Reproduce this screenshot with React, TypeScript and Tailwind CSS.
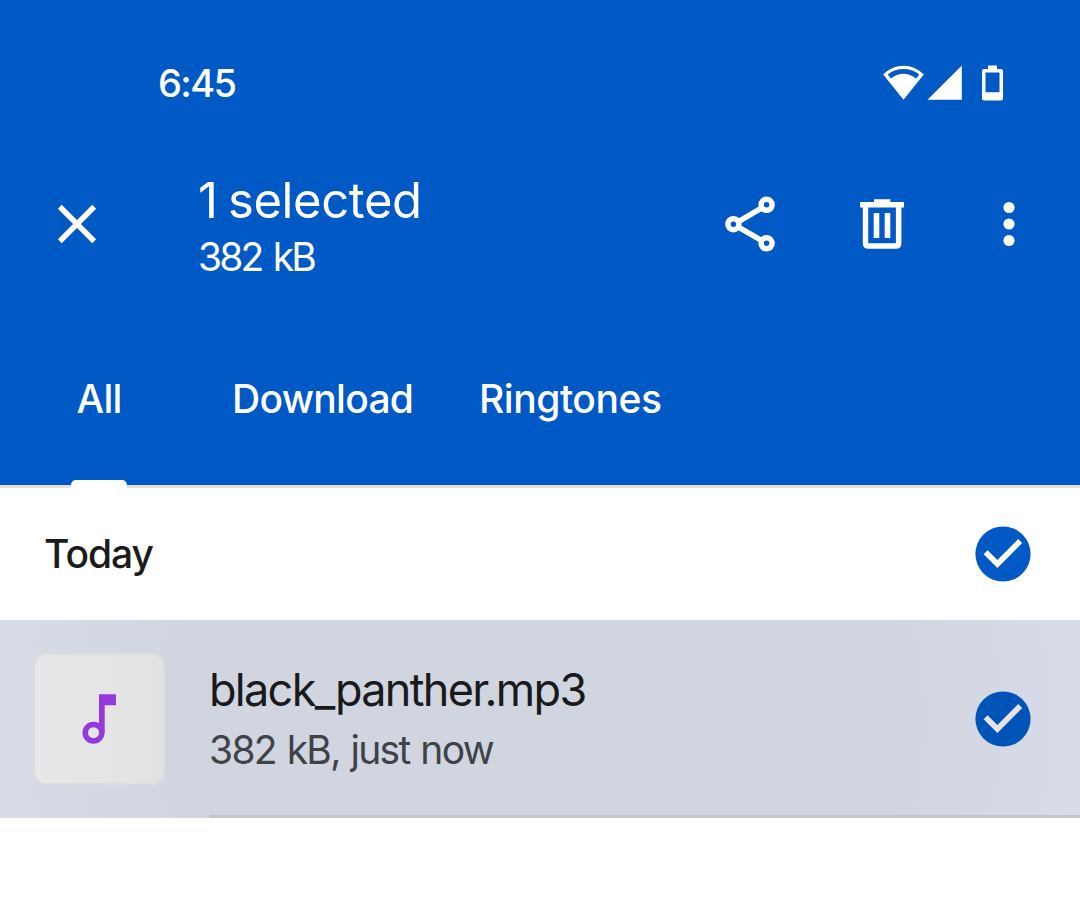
import React from "react";

const WifiIcon = () => (
  <svg width="42" height="36" viewBox="0 0 42 36" className="block">
    <path
      fillRule="evenodd"
      fill="white"
      d="M20.5 34.7 0.2 9.4C11.5-2.3 29.5-2.3 40.8 9.4L20.5 34.7ZM4.7 9.4 8 13.6C15.5 7.2 25.5 7.2 33 13.6L36.3 9.4C27 2.2 14 2.2 4.7 9.4Z"
    />
  </svg>
);

const SignalIcon = () => (
  <svg width="36" height="36" viewBox="0 0 36 36" className="block">
    <path fill="white" d="M0.5 34.7H34.8V0.4Z" />
  </svg>
);

const BatteryIcon = () => (
  <svg width="22" height="36" viewBox="0 0 22 36" className="block">
    <path
      fillRule="evenodd"
      fill="white"
      d="M6 0.5H15V4H19Q21 4 21 6V33.5Q21 35.5 19 35.5H2Q0 35.5 0 33.5V6Q0 4 2 4H6ZM3.5 7.5V27.3H17.5V7.5Z"
    />
  </svg>
);

const CloseIcon = () => (
  <svg width="66" height="66" viewBox="0 0 66 66" className="block">
    <path d="M15.8 15.8 50.2 50.2M50.2 15.8 15.8 50.2" stroke="white" strokeWidth="5.5" />
  </svg>
);

const ShareIcon = () => (
  <svg width="66" height="66" viewBox="0 0 66 66" fill="none" stroke="white" strokeWidth="5.5" className="block">
    <path d="M21.5 30.6 44.8 16.9M21.5 36.2 44.8 49.6" />
    <circle cx="16.4" cy="33.2" r="5.5" />
    <circle cx="49.6" cy="13.8" r="5.5" />
    <circle cx="49.6" cy="52.3" r="5.5" />
  </svg>
);

const TrashIcon = () => (
  <svg width="66" height="66" viewBox="0 0 66 66" fill="white" className="block">
    <path
      fillRule="evenodd"
      d="M25 8.2H41.3V11H55V16.4H52.4V52.3Q52.4 57.8 46.9 57.8H19.3Q13.8 57.8 13.8 52.3V16.4H11V11H25ZM19.2 16.4V52.2H46.9V16.4Z"
    />
    <path d="M24.7 22H30.3V47H24.7ZM35.7 22H41.3V47H35.7Z" />
  </svg>
);

const MoreIcon = () => (
  <svg width="66" height="66" viewBox="0 0 66 66" fill="white" className="block">
    <circle cx="33" cy="16.5" r="5.6" />
    <circle cx="33" cy="33" r="5.6" />
    <circle cx="33" cy="49.5" r="5.6" />
  </svg>
);

const NoteIcon = () => (
  <svg width="66" height="66" viewBox="0 0 66 66" className="block">
    <circle cx="27.5" cy="46.7" r="8.3" fill="none" stroke="#9339de" strokeWidth="5.5" />
    <path fill="#9339de" d="M33 8.2H50V19.2H38.7V46.7H33Z" />
  </svg>
);

interface CheckProps {
  circle: string;
  mark: string;
}

const CheckIcon = ({ circle, mark }: CheckProps) => (
  <svg width="56" height="56" viewBox="0 0 56 56" className="block">
    <circle cx="28" cy="28" r="27.6" fill={circle} />
    <path d="M10.6 26.2 22.4 38 45.2 15" fill="none" stroke={mark} strokeWidth="5.6" />
  </svg>
);

const App = () => {
  return (
    <div className="w-[1080px] h-[900px] overflow-hidden bg-white font-['Inter','Roboto',sans-serif] whitespace-nowrap">
      <header className="flex h-[485px] flex-col bg-[#0059c5] text-white">
        {/* Status bar */}
        <div className="flex h-[166px] items-center justify-between pl-[158px] pr-[76px]">
          <span className="text-[38px] leading-[40px] font-medium tracking-[-1.6px]">6:45</span>
          <div className="flex items-center">
            <WifiIcon />
            <div className="ml-[2px]">
              <SignalIcon />
            </div>
            <div className="ml-[19px]">
              <BatteryIcon />
            </div>
          </div>
        </div>

        {/* Selection toolbar */}
        <div className="flex h-[116px] items-center pl-11 pr-[38px]">
          <CloseIcon />
          <div className="ml-[88px] flex-1 pt-1">
            <h1 className="text-[49px] leading-[62px] tracking-[-0.4px] [word-spacing:-3px]">1 selected</h1>
            <p className="text-[39px] leading-[50px] tracking-[-2.8px] [word-spacing:3px]">382 kB</p>
          </div>
          <div className="flex">
            <ShareIcon />
            <div className="ml-[66px]">
              <TrashIcon />
            </div>
            <div className="ml-[61px]">
              <MoreIcon />
            </div>
          </div>
        </div>

        {/* Tabs */}
        <nav className="flex flex-1 text-[39px] leading-[48px] font-medium">
          <div className="flex w-[198px] flex-col items-center justify-between pt-[93px]">
            <span className="tracking-[-0.8px]">All</span>
            <span className="h-[5px] w-14 rounded-t-[8px] bg-white" />
          </div>
          <span className="ml-[34px] w-[247px] pt-[93px] tracking-[-0.7px]">Download</span>
          <span className="pt-[93px] tracking-[-0.45px]">Ringtones</span>
        </nav>
      </header>

      <div className="flex h-[3px] bg-[#e0e0e0]">
        <span className="ml-[71px] h-full w-14 bg-white" />
      </div>

      <section className="flex h-[132px] items-center justify-between pl-11 pr-[49px]">
        <h2 className="text-[39px] leading-[48px] font-medium tracking-[-1px] text-[#1b1b1b]">Today</h2>
        <CheckIcon circle="#0059c5" mark="#ffffff" />
      </section>

      {/* Selected file */}
      <section className="flex h-[198px] bg-[radial-gradient(circle_at_center,#d1d5e0_350px,#d8dce8_550px)] pl-[33px]">
        <div className="mt-[33px] flex h-[132px] w-[132px] items-center justify-center rounded-[13px] border-2 border-[#dcdddf] bg-linear-to-r from-[#e8e8e9] to-[#e2e2e3]">
          <NoteIcon />
        </div>
        <div className="ml-11 flex flex-1 items-center justify-between border-b-3 border-[#c5c6c9] pt-[2px] pr-[49px]">
          <div className="pt-[3px]">
            <p className="text-[45px] leading-[60px] tracking-[-1.7px] text-[#191a1c]">black_panther.mp3</p>
            <p className="text-[39px] leading-[60px] tracking-[-1.7px] text-[#3f4249] [word-spacing:1.5px]">382 kB, just now</p>
          </div>
          <CheckIcon circle="#0053b7" mark="#e5e5e8" />
        </div>
      </section>
    </div>
  );
};

export default App;
